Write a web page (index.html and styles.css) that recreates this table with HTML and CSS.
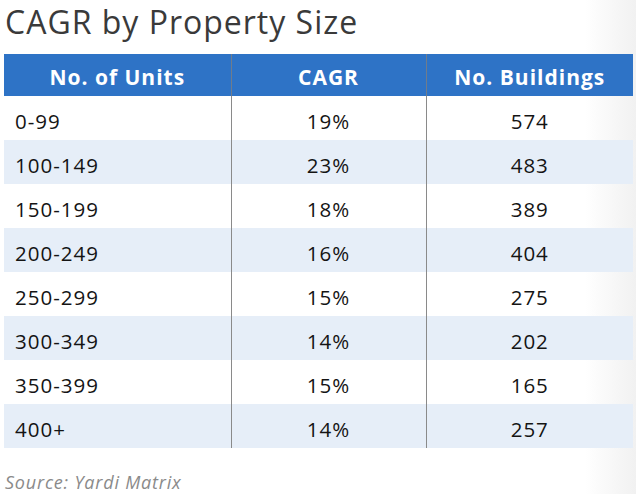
FILE: index.html
```html
<!DOCTYPE html>
<html>
<head>
<meta charset="utf-8">
<link rel="stylesheet" href="styles.css">
</head>
<body>
<div class="page">
  <h1 class="title">CAGR by Property Size</h1>
  <table class="data">
    <thead>
      <tr><th>No. of Units</th><th>CAGR</th><th>No. Buildings</th></tr>
    </thead>
    <tbody>
      <tr><td>0-99</td><td>19%</td><td>574</td></tr>
      <tr><td>100-149</td><td>23%</td><td>483</td></tr>
      <tr><td>150-199</td><td>18%</td><td>389</td></tr>
      <tr><td>200-249</td><td>16%</td><td>404</td></tr>
      <tr><td>250-299</td><td>15%</td><td>275</td></tr>
      <tr><td>300-349</td><td>14%</td><td>202</td></tr>
      <tr><td>350-399</td><td>15%</td><td>165</td></tr>
      <tr><td>400+</td><td>14%</td><td>257</td></tr>
    </tbody>
  </table>
  <p class="source">Source: Yardi Matrix</p>
</div>
</body>
</html>
```

FILE: styles.css
```css
html, body {
  margin: 0;
  padding: 0;
}
body {
  width: 636px;
  height: 494px;
  overflow: hidden;
  background: linear-gradient(to right, #ffffff 585px, #f1f1f1 636px);
  font-family: "Open Sans", "Lato", sans-serif;
}
.page {
  padding: 2px 3px 0 4px;
}
.title {
  margin: 0 0 0 1px;
  font-size: 32px;
  line-height: 40px;
  font-weight: 400;
  color: #3a3a3a;
  letter-spacing: 1px;
  height: 52px;
}
.data {
  width: 629px;
  border-collapse: collapse;
  table-layout: fixed;
}
.data th:nth-child(1) { width: 227px; }
.data th:nth-child(2) { width: 195px; }
.data th {
  background: #2e73c6;
  color: #ffffff;
  font-weight: 700;
  font-size: 21px;
  letter-spacing: 1px;
  height: 42px;
  padding: 3px 0 0 0;
  box-sizing: border-box;
  text-align: center;
  border-left: 1px solid #6f7c8c;
}
.data th:first-child, .data td:first-child { border-left: none; }
.data td {
  height: 44px;
  box-sizing: border-box;
  padding: 5px 0 0 0;
  font-size: 20.5px;
  letter-spacing: 1px;
  color: #141414;
  text-align: center;
  border-left: 1px solid #8a8a8a;
}
.data td:first-child {
  text-align: left;
  padding-left: 11px;
}
.data tbody tr:nth-child(even) td {
  background: #e6eef8;
}
.source {
  margin: 22px 0 0 1px;
  font-size: 18px;
  letter-spacing: 0.8px;
  font-style: italic;
  color: #8a8a8a;
}
```
